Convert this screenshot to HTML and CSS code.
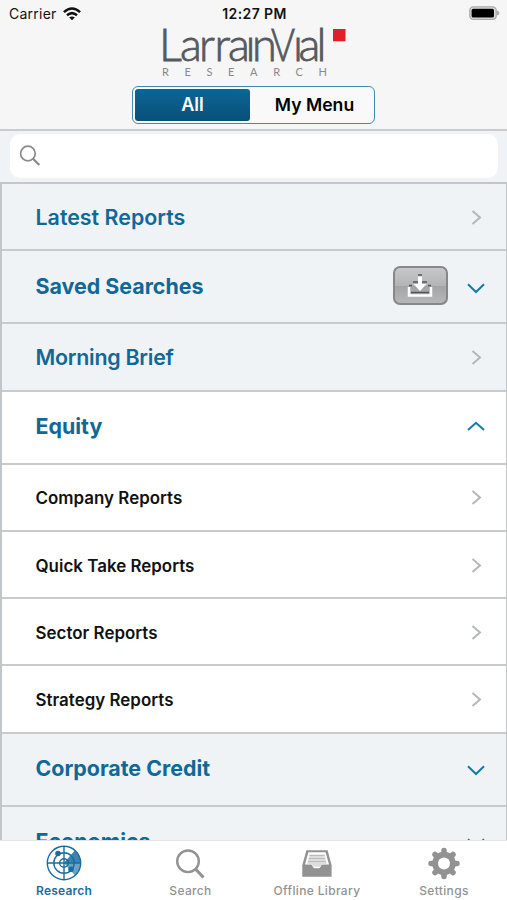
FILE: index.html
```html
<!DOCTYPE html>
<html lang="en">
<head>
<meta charset="utf-8">
<meta name="viewport" content="width=device-width, initial-scale=1">
<title>LarrainVial Research</title>
<link rel="stylesheet" href="styles.css">
</head>
<body>
<div class="app">
  <header class="header">
    <div class="status">
      <div class="carrier"><span>Carrier</span>
        <svg width="18" height="14" viewBox="0 0 18 14"><g fill="none" stroke="#111" stroke-width="2.5"><path d="M.9 5.1Q9-2.2 17.1 5.1"/><path d="M4 8.3Q9 4 14 8.3"/></g><path d="M6.2 10.5Q9 8.3 11.8 10.5L9 13.3Z" fill="#111"/></svg>
      </div>
      <div class="time">12:27 PM</div>
      <svg class="battery" width="31" height="15" viewBox="0 0 31 15"><rect x=".8" y=".8" width="26.4" height="12.6" rx="3.6" fill="#ddd" stroke="#aaa" stroke-width="1.3"/><rect x="2.6" y="2.8" width="22.4" height="8.7" rx="1.6" fill="#000"/><path d="M28 4.6Q30.4 5.3 30.4 7.1T28 9.6Z" fill="#aaa"/></svg>
    </div>
    <svg class="logo" width="186" height="52" viewBox="0 0 186 52" role="img" aria-label="LarrainVial Research">
      <text class="logo-name" y="34.3"><tspan x="-2 19 38 53.5 67 84.5 91">Larraın</tspan><tspan x="110" textLength="24" lengthAdjust="spacingAndGlyphs">V</tspan><tspan x="132 137.5 155.5">ıal</tspan></text>
      <text class="logo-sub" x="1" y="48.7" textLength="165">RESEARCH</text>
      <rect x="172" y="2" width="12.5" height="12.3" fill="#df2027"/>
    </svg>
    <div class="segmented"><div class="segment active">All</div><div class="segment menu">My Menu</div></div>
  </header>
  <div class="search-bar"><div class="search-field"><svg width="22" height="22" viewBox="0 0 22 22" fill="none" stroke="#8a8a8a"><circle cx="8.9" cy="8.5" r="7.3" stroke-width="1.7"/><path d="M14 13.8L20.3 20" stroke-width="2.3"/></svg></div></div>
  <main class="list">
    <div class="row"><span class="label latest">Latest Reports</span><svg class="chev" viewBox="0 0 20 20"><path d="M6.5 4L14 10.5L6.5 17"/></svg></div>
    <div class="row tall"><span class="label saved">Saved Searches</span>
      <span class="download"><svg width="26" height="24" viewBox="0 0 26 24"><path d="M11 1h4M6 8h14M2 11.5h3M21 11.5h3M4 18.5h18" fill="none" stroke="#555" stroke-width="1.7"/><path d="M11 2.5h4v7.5h4.5L13 17L6.5 10H11Z" fill="#fff"/><path d="M2 13v8.5h22V13" fill="none" stroke="#fff" stroke-width="2.5"/></svg></span>
      <svg class="chev blue" viewBox="0 0 20 20"><path d="M2 7.2L10 15L18 7.2"/></svg></div>
    <div class="row"><span class="label morning">Morning Brief</span><svg class="chev" viewBox="0 0 20 20"><path d="M6.5 4L14 10.5L6.5 17"/></svg></div>
    <div class="row tall white"><span class="label equity">Equity</span><svg class="chev blue" viewBox="0 0 20 20"><path d="M2 13L10 5.8L18 13"/></svg></div>
    <div class="row white"><span class="label sub">Company Reports</span><svg class="chev" viewBox="0 0 20 20"><path d="M6.5 4L14 10.5L6.5 17"/></svg></div>
    <div class="row white"><span class="label sub">Quick Take Reports</span><svg class="chev" viewBox="0 0 20 20"><path d="M6.5 4L14 10.5L6.5 17"/></svg></div>
    <div class="row white"><span class="label sub">Sector Reports</span><svg class="chev" viewBox="0 0 20 20"><path d="M6.5 4L14 10.5L6.5 17"/></svg></div>
    <div class="row white"><span class="label sub">Strategy Reports</span><svg class="chev" viewBox="0 0 20 20"><path d="M6.5 4L14 10.5L6.5 17"/></svg></div>
    <div class="row tall"><span class="label credit">Corporate Credit</span><svg class="chev blue" viewBox="0 0 20 20"><path d="M2 7.2L10 15L18 7.2"/></svg></div>
    <div class="row tall"><span class="label economics">Economics</span><svg class="chev blue" viewBox="0 0 20 20"><path d="M2 7.2L10 15L18 7.2"/></svg></div>
  </main>
  <nav class="tabs">
    <div class="tab selected"><svg width="36" height="36" viewBox="0 0 36 36"><path d="M18 18L29 5.5A16.7 16.7 0 0 1 29 30.5Z" fill="#6ba3c5"/><path d="M18 18L29 5.5A16.7 16.7 0 0 1 34.7 18Z" fill="#3b84b0"/><g fill="none" stroke="#1d6c9e" stroke-width="1.4"><circle cx="18" cy="18" r="16.7"/><circle cx="18" cy="18" r="10.2"/><circle cx="18" cy="18" r="4.3"/><path d="M1 18h34M18 1v34"/></g><circle cx="12" cy="8.5" r="2.8" fill="#1d6c9e"/><circle cx="25" cy="24.3" r="2.8" fill="#1d6c9e"/></svg><span>Research</span></div>
    <div class="tab"><svg width="36" height="36" viewBox="0 0 36 36" fill="none" stroke="#929292"><circle cx="15" cy="16.3" r="10.8" stroke-width="2.4"/><path d="M22.5 24L30.5 32.5" stroke-width="3.2"/></svg><span>Search</span></div>
    <div class="tab"><svg width="36" height="36" viewBox="0 0 36 36"><path d="M7.4 5.2h21.2l4 15V31.7H3.3V20.2Z" fill="#929292"/><path d="M9.4 7.2h17.2l3.4 12.3h-6.5q-1.5 0-1.8 2-.3 1.8-2 1.8h-4q-1.7 0-2-1.8-.3-2-1.8-2H6Z" fill="#fff"/><path d="M10.5 9.5h15l2.3 9.8h-4.3q-1.5 0-1.8 2.4h-7.4q-.3-2.4-1.8-2.4H8.2Z" fill="#ddd"/><path d="M10.5 10.5h15M9.8 13.5h16.4M9.2 16.5h17.6" stroke="#bbb"/></svg><span>Offline Library</span></div>
    <div class="tab"><svg width="36" height="36" viewBox="0 0 36 36"><g stroke="#929292" stroke-width="5.5" stroke-linecap="round"><path d="M18 5.5v26M5 18.5h26M9 9.5l18 18M27 9.5L9 27.5"/></g><circle cx="18" cy="18.5" r="11.8" fill="#929292"/><circle cx="18" cy="18.5" r="6" fill="#fff"/></svg><span>Settings</span></div>
  </nav>
</div>
</body>
</html>
```
FILE: styles.css
```css
* { box-sizing: border-box; }
body { margin: 0; font-family: Inter, "Liberation Sans", sans-serif; color: #111; }
svg { display: block; flex: none; }
.app { width: 507px; height: 900px; display: flex; flex-direction: column; overflow: hidden; background: #fff; }
.header { height: 131px; flex: none; background: #f6f6f6; border-bottom: 2px solid #c9cbcd; display: flex; flex-direction: column; align-items: center; }
.status { width: 100%; height: 27px; display: grid; grid-template-columns: 1fr auto 1fr; align-items: center; padding: 0 7px 0 9px; font-size: 14px; }
.carrier { display: flex; gap: 6px; align-items: center; letter-spacing: .25px; }
.time { font-weight: 600; letter-spacing: .4px; }
.battery { justify-self: end; }
.logo { margin-left: 1px; overflow: visible; }
.logo-name { font: 300 45px Lato, sans-serif; fill: #555a5e; stroke: #555a5e; stroke-width: .8; }
.logo-sub { font: 400 11px Lato, sans-serif; fill: #888; }
.segmented { width: 243px; height: 38px; margin-top: 7px; border: 1.5px solid #4388b4; border-radius: 6px; padding: 2px; display: flex; background: #f9f9f9; }
.segment { flex: 1; display: flex; align-items: center; justify-content: center; font-size: 18px; font-weight: 600; color: #000; padding-bottom: 2px; }
.segment.active { flex: 0 0 115px; color: #fff; border-radius: 3px; background: linear-gradient(#0c6697, #085078); }
.segment.menu { font-size: 17.6px; padding-left: 7px; }
.search-bar { height: 51px; flex: none; background: #eff3f6; padding: 3px 9px 4px 10px; }
.search-field { height: 44px; border-radius: 10px; background: #fff; display: flex; align-items: center; padding-left: 9px; }
.list { flex: 1; min-height: 0; overflow: hidden; border: solid #c3c6c9; border-width: 2px 1px 0 2px; }
.row { height: 67.3px; background: #eff3f6; border-bottom: 2px solid #c8cacc; display: flex; align-items: center; padding: 0 20px 0 33.5px; }
.row.tall { height: 73px; }
.row.white { background: #fff; }
.label { flex: 1; font-size: 21.4px; font-weight: 600; color: #116896; white-space: nowrap; }
.tall .label { font-weight: 700; padding-bottom: 2px; }
.morning { letter-spacing: -.25px; }
.label.sub { font-size: 16.9px; letter-spacing: .03px; color: #111; padding-top: 2px; }
.chev { width: 20px; height: 20px; fill: none; stroke: #b4b7ba; stroke-width: 2; }
.chev.blue { stroke: #137ba8; stroke-width: 2; }
.download { width: 55px; height: 39px; margin: 0 18.5px 2px 0; display: flex; align-items: center; justify-content: center; border: 2px solid #858789; border-radius: 7px; background: linear-gradient(#c6c8ca, #b2b4b6 50%, #a2a4a5 51%, #b5b7b8); }
.tabs { height: 60px; flex: none; display: grid; grid-template-columns: 128px 125px 128px 126px; background: #fff; border-top: 1px solid #e2e4e5; }
.tab { display: flex; flex-direction: column; align-items: center; padding-top: 4px; font-size: 12px; font-weight: 500; line-height: 16px; letter-spacing: .35px; color: #929292; }
.tab span { margin-top: 2px; }
.selected { color: #1d6c9e; font-weight: 600; letter-spacing: .2px; }
```
